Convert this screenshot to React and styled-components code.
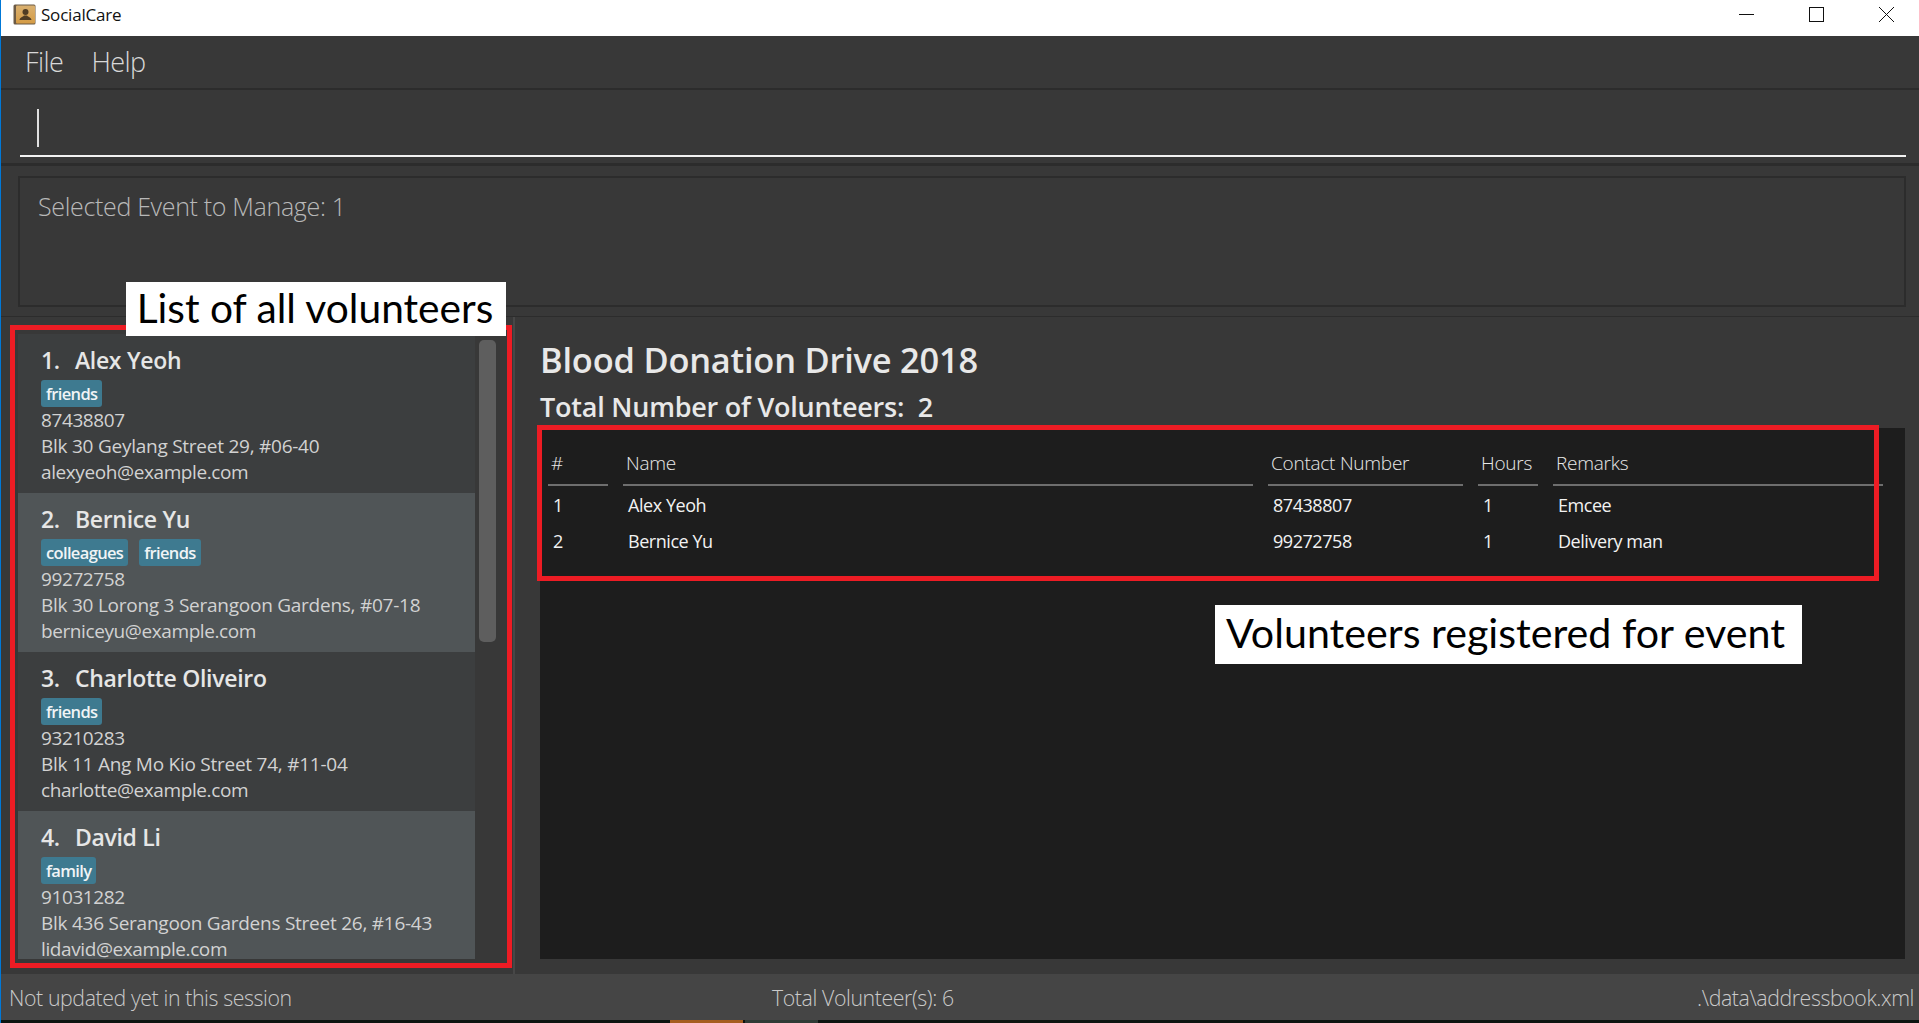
import React from "react";
import styled, { createGlobalStyle } from "styled-components";

const Global = createGlobalStyle`
  html, body { margin: 0; padding: 0; background: #383838; }
  * { box-sizing: border-box; }
  body { font-family: "Open Sans", "Noto Sans", sans-serif; overflow: hidden; }
`;

const Window = styled.div`
  position: relative;
  width: 1919px;
  height: 1023px;
  display: flex;
  flex-direction: column;
  overflow: hidden;
  background: #383838;
  border-left: 1px solid #0078d7;
`;
const TitleBar = styled.div`
  height: 36px;
  flex: none;
  background: #fff;
  display: flex;
  align-items: center;
  padding: 0 25px 8px 12px;
`;
const AppTitle = styled.span`
  margin-left: 5px;
  font-size: 17px;
  letter-spacing: -0.2px;
  color: #111;
`;
const WinControls = styled.div`
  margin-left: auto;
  display: flex;
  gap: 55px;
`;
const MenuBar = styled.div`
  height: 54px;
  flex: none;
  display: flex;
  align-items: center;
  gap: 28px;
  padding: 0 0 1px 24px;
  border-bottom: 2px solid #2c2c2c;
`;
const MenuItem = styled.span`
  font-size: 27px;
  font-weight: 300;
  letter-spacing: -0.55px;
  color: #d8d8d8;
`;
const CommandBox = styled.div`
  height: 76px;
  flex: none;
  padding: 0 13px 6px 19px;
  border-bottom: 3px solid #2c2c2c;
  display: flex;
`;
const CommandField = styled.div`
  flex: 1;
  border-bottom: 2px solid #f2f2f2;
  padding: 19px 0 9px 17px;
`;
const Caret = styled.div`
  width: 2px;
  height: 38px;
  background: #e0e0e0;
`;
const ResultWrap = styled.div`
  height: 151px;
  flex: none;
  padding: 10px 13px 9px 17px;
  border-bottom: 1px solid #2c2c2c;
  display: flex;
`;
const ResultBox = styled.div`
  flex: 1;
  border: 2px solid #2c2c2c;
  padding: 13px 0 0 18px;
  font-size: 25px;
  line-height: 30px;
  font-weight: 300;
  letter-spacing: -0.33px;
  color: #b8b8b8;
`;
const Main = styled.div`
  flex: 1;
  min-height: 0;
  display: flex;
`;
const LeftPane = styled.div`
  width: 514px;
  flex: none;
  padding: 17px 0 15px 17px;
  display: flex;
  border-right: 2px solid #474747;
`;
const CardColumn = styled.div`
  width: 457px;
  flex: none;
  overflow: hidden;
  background: #3c3e3f;
`;
const Card = styled.div`
  height: 159px;
  padding: 11px 0 8px 23px;
  background: ${(p) => (p.$alt ? "#505557" : "#3c3e3f")};
`;
const CardName = styled.div`
  font-size: 23px;
  line-height: 30px;
  font-weight: 600;
  color: #e6e6e6;
  letter-spacing: -0.3px;
  display: flex;
  gap: 15px;
`;
const TagRow = styled.div`
  display: flex;
  gap: 11px;
  margin-top: 5px;
`;
const Tag = styled.span`
  height: 27px;
  padding: 0 5px;
  border-radius: 3px;
  background: #3e7a90;
  color: #f0f4f6;
  font-size: 16.5px;
  line-height: 27px;
  font-weight: 600;
  letter-spacing: -0.65px;
`;
const CardLine = styled.div`
  font-size: 19px;
  line-height: 26px;
  font-weight: 400;
  letter-spacing: ${(p) => (p.$wide ? "-0.25px" : "-0.4px")};
  color: #d2d2d2;
  white-space: nowrap;
`;
const ScrollTrack = styled.div`
  width: 25px;
  flex: none;
  padding: 6px 4px 0;
`;
const ScrollThumb = styled.div`
  height: 302px;
  width: 17px;
  border-radius: 5px;
  background: #5e5e5e;
`;
const RightPane = styled.div`
  flex: 1;
  min-width: 0;
  padding: 21px 14px 15px 25px;
  display: flex;
  flex-direction: column;
`;
const EventTitle = styled.div`
  font-size: 34.4px;
  line-height: 44px;
  font-weight: 600;
  color: #e8e8e8;
  letter-spacing: -0.2px;
`;
const EventCount = styled.div`
  margin-top: 7px;
  font-size: 27px;
  line-height: 36px;
  font-weight: 600;
  color: #e8e8e8;
  letter-spacing: -0.22px;
  white-space: pre;
`;
const Table = styled.div`
  margin-top: 3px;
  flex: 1;
  background: #1d1d1d;
  padding-left: 8px;
`;
const HeadRow = styled.div`
  display: grid;
  grid-template-columns: 60px 630px 195px 60px 330px;
  column-gap: 15px;
`;
const HeadCell = styled.div`
  height: 58px;
  padding: 22px 0 0 3px;
  border-bottom: 2px solid #6e6e6e;
  font-size: 19px;
  line-height: 26px;
  font-weight: 300;
  letter-spacing: -0.25px;
  color: #e8e8e8;
`;
const BodyCell = styled.div`
  height: 36px;
  padding-left: ${(p) => (p.$num ? "5px" : "5px")};
  font-size: 18px;
  line-height: 36px;
  letter-spacing: -0.45px;
  color: #f2f2f2;
`;
const BodyRows = styled.div`
  padding-top: 1px;
`;
const StatusBar = styled.div`
  height: 46px;
  flex: none;
  background: #454545;
  display: grid;
  grid-template-columns: 763px 1fr auto;
  align-items: center;
  padding: 0 5px 0 8px;
  font-size: 21.3px;
  font-weight: 300;
  letter-spacing: -0.4px;
  color: #cacaca;
`;
const Taskbar = styled.div`
  height: 3px;
  flex: none;
  margin-left: -1px;
  background: #0c1410;
  display: flex;
  padding-left: 670px;
  gap: 2px;
`;
const TaskItem = styled.div`
  width: 73px;
  background: ${(p) => p.$c};
`;

const RedFrame = styled.div`
  position: absolute;
  border: 5px solid #ed1c24;
  pointer-events: none;
`;
const ListFrame = styled(RedFrame)`
  left: 9px;
  top: 325px;
  width: 502px;
  height: 643px;
`;
const TableFrame = styled(RedFrame)`
  left: 536px;
  top: 425px;
  width: 1342px;
  height: 156px;
`;
const Callout = styled.div`
  position: absolute;
  background: #fff;
  color: #000;
  font-family: "Lato", "Open Sans", sans-serif;
  white-space: nowrap;
  display: flex;
  align-items: center;
  justify-content: center;
`;
const ListCallout = styled(Callout)`
  left: 125px;
  top: 282px;
  width: 380px;
  height: 54px;
  padding: 0 2px 3px 0;
  font-size: 40.7px;
`;
const TableCallout = styled(Callout)`
  left: 1214px;
  top: 605px;
  width: 587px;
  height: 59px;
  padding: 0 6px 5px 0;
  font-size: 41.2px;
`;

const AppIcon = () => (
  <svg width="23" height="21" viewBox="0 0 23 21">
    <defs>
      <linearGradient id="bookFace" x1="0" y1="0" x2="0" y2="1">
        <stop offset="0" stopColor="#d9b070" />
        <stop offset="1" stopColor="#d59c45" />
      </linearGradient>
    </defs>
    <rect x="0.5" y="0.5" width="22" height="20" rx="1.5" fill="#6b5a45" />
    <rect x="3" y="1.5" width="19" height="18" rx="1" fill="url(#bookFace)" />
    <circle cx="12.5" cy="8" r="3" fill="#4f3c24" />
    <path d="M6.5 16 C7 13 10 13 11 11.5 H14 C15 13 18 13 18.5 16 Z" fill="#4f3c24" />
  </svg>
);
const MinIcon = () => (
  <svg width="15" height="15" viewBox="0 0 15 15"><path d="M0 7.5H15" stroke="#111" strokeWidth="1" /></svg>
);
const MaxIcon = () => (
  <svg width="15" height="15" viewBox="0 0 15 15"><rect x="0.5" y="0.5" width="14" height="14" fill="none" stroke="#111" strokeWidth="1" /></svg>
);
const CloseIcon = () => (
  <svg width="15" height="15" viewBox="0 0 15 15"><path d="M0 0L15 15M15 0L0 15" stroke="#111" strokeWidth="1" /></svg>
);

const volunteers = [
  { n: 1, name: "Alex Yeoh", tags: ["friends"], phone: "87438807", addr: "Blk 30 Geylang Street 29, #06-40", mail: "alexyeoh@example.com" },
  { n: 2, name: "Bernice Yu", tags: ["colleagues", "friends"], phone: "99272758", addr: "Blk 30 Lorong 3 Serangoon Gardens, #07-18", mail: "berniceyu@example.com" },
  { n: 3, name: "Charlotte Oliveiro", tags: ["friends"], phone: "93210283", addr: "Blk 11 Ang Mo Kio Street 74, #11-04", mail: "charlotte@example.com" },
  { n: 4, name: "David Li", tags: ["family"], phone: "91031282", addr: "Blk 436 Serangoon Gardens Street 26, #16-43", mail: "lidavid@example.com" },
];
const rows = [
  ["1", "Alex Yeoh", "87438807", "1", "Emcee"],
  ["2", "Bernice Yu", "99272758", "1", "Delivery man"],
];

export default function App() {
  return (
    <Window>
      <Global />
      <TitleBar>
        <AppIcon />
        <AppTitle>SocialCare</AppTitle>
        <WinControls>
          <MinIcon />
          <MaxIcon />
          <CloseIcon />
        </WinControls>
      </TitleBar>
      <MenuBar>
        <MenuItem>File</MenuItem>
        <MenuItem>Help</MenuItem>
      </MenuBar>
      <CommandBox>
        <CommandField>
          <Caret />
        </CommandField>
      </CommandBox>
      <ResultWrap>
        <ResultBox>Selected Event to Manage: 1</ResultBox>
      </ResultWrap>
      <Main>
        <LeftPane>
          <CardColumn>
            {volunteers.map((v, i) => (
              <Card key={v.n} $alt={i % 2 === 1}>
                <CardName>
                  <span>{v.n}.</span>
                  <span>{v.name}</span>
                </CardName>
                <TagRow>
                  {v.tags.map((t) => (
                    <Tag key={t}>{t}</Tag>
                  ))}
                </TagRow>
                <CardLine>{v.phone}</CardLine>
                <CardLine $wide>{v.addr}</CardLine>
                <CardLine>{v.mail}</CardLine>
              </Card>
            ))}
          </CardColumn>
          <ScrollTrack>
            <ScrollThumb />
          </ScrollTrack>
        </LeftPane>
        <RightPane>
          <EventTitle>Blood Donation Drive 2018</EventTitle>
          <EventCount>Total Number of Volunteers:  2</EventCount>
          <Table>
            <HeadRow>
              {["#", "Name", "Contact Number", "Hours", "Remarks"].map((h) => (
                <HeadCell key={h}>{h}</HeadCell>
              ))}
            </HeadRow>
            <BodyRows>
              {rows.map((r) => (
                <HeadRow key={r[0]}>
                  <BodyCell $num>{r[0]}</BodyCell>
                  <BodyCell>{r[1]}</BodyCell>
                  <BodyCell>{r[2]}</BodyCell>
                  <BodyCell $num>{r[3]}</BodyCell>
                  <BodyCell>{r[4]}</BodyCell>
                </HeadRow>
              ))}
            </BodyRows>
          </Table>
        </RightPane>
      </Main>
      <StatusBar>
        <span>Not updated yet in this session</span>
        <span>Total Volunteer(s): 6</span>
        <span>.\data\addressbook.xml</span>
      </StatusBar>
      <Taskbar>
        <TaskItem $c="#a55d1f" />
        <TaskItem $c="#2e3b35" />
      </Taskbar>
      <ListFrame />
      <TableFrame />
      <ListCallout>List of all volunteers</ListCallout>
      <TableCallout>Volunteers registered for event</TableCallout>
    </Window>
  );
}
